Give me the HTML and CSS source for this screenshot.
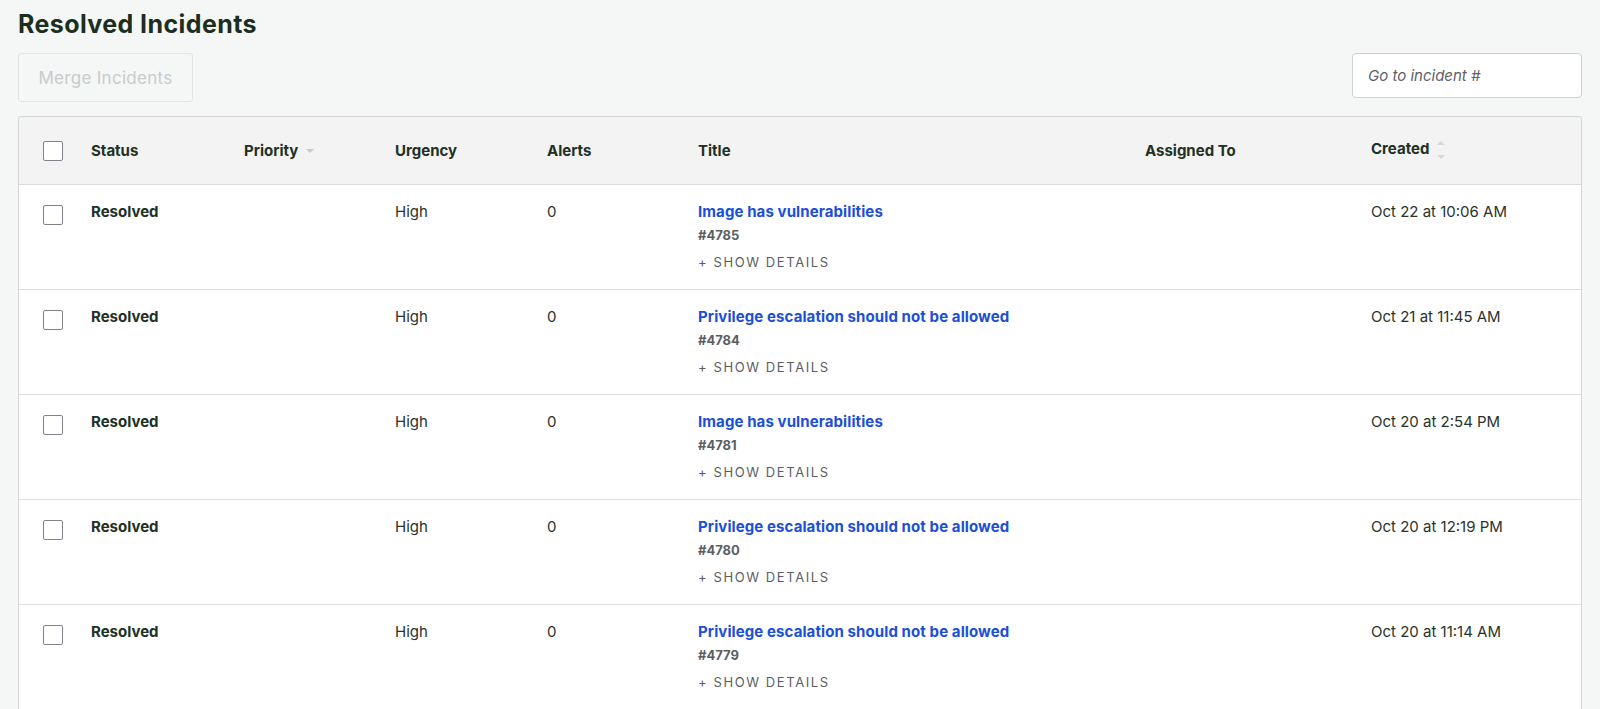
FILE: index.html
```html
<!DOCTYPE html>
<html lang="en">
<head>
<meta charset="utf-8">
<title>Resolved Incidents</title>
<link rel="stylesheet" href="styles.css">
</head>
<body>
<div class="page">
  <h1 class="page-title">Resolved Incidents</h1>
  <div class="toolbar">
    <button class="btn-merge" disabled>Merge Incidents</button>
    <input class="goto" type="text" placeholder="Go to incident #">
  </div>
  <div class="table">
    <div class="row head">
      <div class="cell cb-cell"><span class="cb"></span></div>
      <div class="cell">Status</div>
      <div class="cell">Priority <span class="tri-down"></span></div>
      <div class="cell">Urgency</div>
      <div class="cell">Alerts</div>
      <div class="cell">Title</div>
      <div class="cell">Assigned To</div>
      <div class="cell created-h">Created <span class="sorter"><span class="s-up"></span><span class="s-down"></span></span></div>
    </div>

    <div class="row">
      <div class="cell cb-cell"><span class="cb"></span></div>
      <div class="cell status">Resolved</div>
      <div class="cell"></div>
      <div class="cell">High</div>
      <div class="cell">0</div>
      <div class="cell title-cell">
        <a class="inc-link" href="#">Image has vulnerabilities</a>
        <div class="inc-num">#4785</div>
        <div class="details">+ Show Details</div>
      </div>
      <div class="cell"></div>
      <div class="cell">Oct 22 at 10:06 AM</div>
    </div>

    <div class="row">
      <div class="cell cb-cell"><span class="cb"></span></div>
      <div class="cell status">Resolved</div>
      <div class="cell"></div>
      <div class="cell">High</div>
      <div class="cell">0</div>
      <div class="cell title-cell">
        <a class="inc-link" href="#">Privilege escalation should not be allowed</a>
        <div class="inc-num">#4784</div>
        <div class="details">+ Show Details</div>
      </div>
      <div class="cell"></div>
      <div class="cell">Oct 21 at 11:45 AM</div>
    </div>

    <div class="row">
      <div class="cell cb-cell"><span class="cb"></span></div>
      <div class="cell status">Resolved</div>
      <div class="cell"></div>
      <div class="cell">High</div>
      <div class="cell">0</div>
      <div class="cell title-cell">
        <a class="inc-link" href="#">Image has vulnerabilities</a>
        <div class="inc-num">#4781</div>
        <div class="details">+ Show Details</div>
      </div>
      <div class="cell"></div>
      <div class="cell">Oct 20 at 2:54 PM</div>
    </div>

    <div class="row">
      <div class="cell cb-cell"><span class="cb"></span></div>
      <div class="cell status">Resolved</div>
      <div class="cell"></div>
      <div class="cell">High</div>
      <div class="cell">0</div>
      <div class="cell title-cell">
        <a class="inc-link" href="#">Privilege escalation should not be allowed</a>
        <div class="inc-num">#4780</div>
        <div class="details">+ Show Details</div>
      </div>
      <div class="cell"></div>
      <div class="cell">Oct 20 at 12:19 PM</div>
    </div>

    <div class="row">
      <div class="cell cb-cell"><span class="cb"></span></div>
      <div class="cell status">Resolved</div>
      <div class="cell"></div>
      <div class="cell">High</div>
      <div class="cell">0</div>
      <div class="cell title-cell">
        <a class="inc-link" href="#">Privilege escalation should not be allowed</a>
        <div class="inc-num">#4779</div>
        <div class="details">+ Show Details</div>
      </div>
      <div class="cell"></div>
      <div class="cell">Oct 20 at 11:14 AM</div>
    </div>
  </div>
</div>
</body>
</html>
```

FILE: styles.css
```css
* { box-sizing: border-box; }

html, body {
  margin: 0;
  padding: 0;
  background: #f4f7f5;
  font-family: Inter, "Liberation Sans", Arial, sans-serif;
  color: #2a332b;
  overflow: hidden;
}

.page {
  padding: 9px 18px 0 18px;
}

.page-title {
  margin: 0;
  font-size: 25px;
  line-height: 30px;
  font-weight: 700;
  color: #1d2e1f;
  letter-spacing: 0.4px;
}

.toolbar {
  display: flex;
  justify-content: space-between;
  align-items: flex-start;
  margin-top: 14px;
  margin-bottom: 14px;
}

.btn-merge {
  width: 175px;
  height: 49px;
  border: 1px solid #e2e4e3;
  border-radius: 3px;
  background: #f4f7f5;
  color: #c9cacd;
  font-family: inherit;
  font-size: 17px;
  letter-spacing: 0.3px;
  padding: 0;
}

.goto {
  width: 230px;
  height: 45px;
  border: 1px solid #cfd1d3;
  border-radius: 4px;
  background: #ffffff;
  padding: 0 15px;
  font-family: inherit;
  font-size: 15px;
  color: #333;
  outline: none;
}

.goto::placeholder {
  font-style: italic;
  color: #5d6166;
}

.table {
  background: #ffffff;
  border: 1px solid #d4d5d7;
  border-bottom: none;
  border-radius: 4px 4px 0 0;
  font-size: 15px;
  line-height: 20px;
}

.row {
  display: grid;
  grid-template-columns: 72px 153px 151px 152px 151px 447px 226px 1fr;
  min-height: 105px;
  border-bottom: 1px solid #dcdddf;
}

.row.head {
  min-height: 68px;
  background: #f3f3f3;
  border-radius: 4px 4px 0 0;
  align-items: center;
  font-weight: 700;
  color: #223024;
}

.row:not(.head) .cell {
  padding-top: 17px;
}

.cell {
  min-width: 0;
}

.cb-cell {
  padding-left: 24px;
}

.row:not(.head) .cb {
  margin-top: 3px;
}

.cb {
  display: block;
  width: 20px;
  height: 20px;
  border: 1.5px solid #80838a;
  border-radius: 2px;
  background: #ffffff;
}

.status {
  font-weight: 700;
  color: #223024;
}

.tri-down {
  display: inline-block;
  width: 0;
  height: 0;
  margin-left: 4px;
  vertical-align: 3px;
  border-left: 4px solid transparent;
  border-right: 4px solid transparent;
  border-top: 4px solid #c8c9cc;
}

.created-h {
  display: flex;
  align-items: center;
  margin-top: -3px;
}

.sorter {
  display: inline-flex;
  flex-direction: column;
  gap: 10px;
  margin-left: 8px;
  margin-top: 2px;
}

.s-up {
  width: 0;
  height: 0;
  border-left: 4px solid transparent;
  border-right: 4px solid transparent;
  border-bottom: 4px solid #d6d7da;
}

.s-down {
  width: 0;
  height: 0;
  border-left: 4px solid transparent;
  border-right: 4px solid transparent;
  border-top: 4px solid #d6d7da;
}

.inc-link {
  display: block;
  color: #1b4fd8;
  font-weight: 700;
  letter-spacing: 0.1px;
  text-decoration: none;
}

.inc-num {
  margin-top: 3px;
  font-size: 13px;
  font-weight: 700;
  color: #5a5e63;
}

.details {
  margin-top: 7px;
  font-size: 13px;
  letter-spacing: 1.6px;
  text-transform: uppercase;
  color: #5a5e63;
}
```
